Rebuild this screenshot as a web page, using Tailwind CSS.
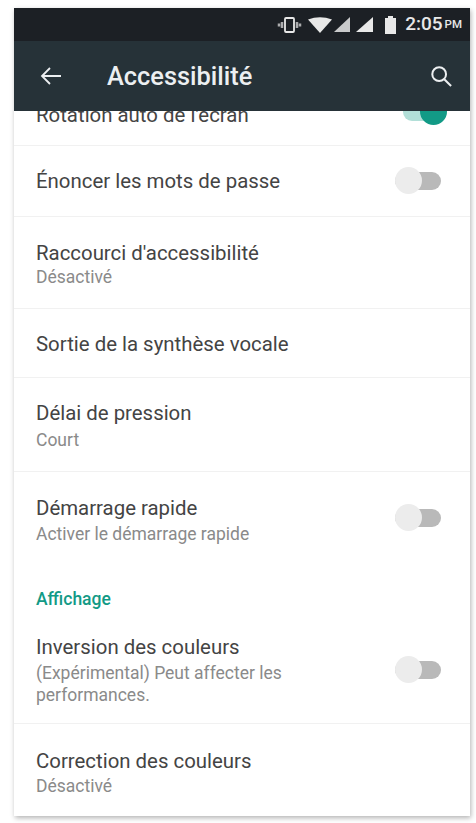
<!DOCTYPE html>
<html>
<head>
    <title>Accessibilité</title>
    <script src="https://cdn.jsdelivr.net/npm/@tailwindcss/browser@4"></script>
</head>
<body class="w-[476px] h-[823px] overflow-hidden bg-white font-['Roboto',sans-serif]">
    <div class="pt-[8px] pl-[14px]">
        <div class="w-[456px] h-[808px] flex flex-col overflow-hidden bg-white shadow-[1px_2px_5px_rgba(0,0,0,0.3)]">
            <!-- status bar -->
            <div class="h-[33px] shrink-0 bg-[#1c2025] flex items-center justify-end pr-[8px] text-[#e8e8e8]">
                <svg class="w-[25px] h-[18px]" viewBox="0 0 25 18" fill="none" stroke="currentColor">
                    <rect x="8" y="2" width="9" height="14" rx="1" stroke-width="1.800" />
                    <path d="M5 6v6M2 7.500v3M20 6v6M23 7.500v3" stroke-width="2.500" opacity=".7" />
                </svg>
                <svg class="w-[24px] h-[16px] ml-[6px]" viewBox="0 0 24 16" fill="currentColor">
                    <path d="M0 2.500Q12-2 24 2.500L12 16Z" />
                </svg>
                <svg class="w-[16px] h-[15px] ml-[2px]" viewBox="0 0 16 15" fill="currentColor" opacity=".85">
                    <path d="M16 0V15H0Z" />
                </svg>
                <svg class="w-[17px] h-[15px] ml-[6px]" viewBox="0 0 17 15" fill="currentColor">
                    <path d="M17 0V15H0Z" />
                </svg>
                <svg class="w-[11px] h-[18px] ml-[12px]" viewBox="0 0 11 18" fill="currentColor">
                    <path d="M3 0H8V2H11V18H0V2H3Z" />
                </svg>
                <span class="ml-[9px] text-[19px] font-medium">2:05</span>
                <span class="ml-[2px] text-[11.500px] font-medium">PM</span>
            </div>
            <!-- app bar -->
            <div class="h-[70px] shrink-0 bg-[#263238] flex items-center text-[#eceff1] relative z-10">
                <svg class="w-[22px] h-[22px] ml-[26px]" viewBox="0 0 22 22" fill="none" stroke="currentColor" stroke-width="1.800">
                    <path d="M21 11H2M10 3l-8 8 8 8" />
                </svg>
                <h1 class="ml-[45px] text-[25.400px] font-medium flex-1">Accessibilité</h1>
                <svg class="w-[22px] h-[22px] mr-[18px]" viewBox="0 0 24 24" fill="none" stroke="currentColor" stroke-width="2.200">
                    <circle cx="10" cy="10" r="7.500" />
                    <path d="M15 15l8 8" />
                </svg>
            </div>
            <!-- list -->
            <div class="flex-1 flex flex-col text-[#444444]">
                <div class="h-[35px] shrink-0 overflow-hidden border-b border-[#f1f1f1] flex justify-between pl-[22px] pr-[23px] items-start">
                    <div class="text-[20.400px] leading-[24px] -mt-[8px]">Rotation auto de l'écran</div>
                    <div class="relative w-[44px] h-[18px] -mt-[8px] rounded-full bg-[#b2dfd8]">
                        <div class="absolute right-0 -top-[5px] w-[27px] h-[27px] rounded-full bg-[#129a86]"></div>
                    </div>
                </div>
                <div class="h-[71px] shrink-0 border-b border-[#f1f1f1] flex items-center justify-between pl-[22px] pr-[29px]">
                    <div class="text-[20.400px]">Énoncer les mots de passe</div>
                    <div class="relative w-[46px] h-[18px] rounded-full bg-[#b9b9b9]">
                        <div class="absolute left-0 -top-[5px] w-[27px] h-[27px] rounded-full bg-[#ececec]"></div>
                    </div>
                </div>
                <div class="h-[92px] shrink-0 border-b border-[#f1f1f1] pl-[22px] pt-[23px]">
                    <div class="text-[20.400px] leading-[26px]">Raccourci d'accessibilité</div>
                    <div class="text-[17.500px] leading-[22px] text-[#8a8a8a]">Désactivé</div>
                </div>
                <div class="h-[69px] shrink-0 border-b border-[#f1f1f1] flex items-center pl-[22px] pt-[2px]">
                    <div class="text-[20.400px]">Sortie de la synthèse vocale</div>
                </div>
                <div class="h-[94px] shrink-0 border-b border-[#f1f1f1] pl-[22px] pt-[22px]">
                    <div class="text-[20.400px] leading-[26px]">Délai de pression</div>
                    <div class="text-[17.500px] leading-[22px] mt-[3px] text-[#8a8a8a]">Court</div>
                </div>
                <div class="h-[92px] shrink-0 flex items-center justify-between pl-[22px] pr-[29px]">
                    <div class="pt-[4px]">
                        <div class="text-[20.400px] leading-[26px]">Démarrage rapide</div>
                        <div class="text-[17.500px] leading-[22px] mt-[2px] text-[#8a8a8a]">Activer le démarrage rapide</div>
                    </div>
                    <div class="relative w-[46px] h-[18px] rounded-full bg-[#b9b9b9]">
                        <div class="absolute left-0 -top-[5px] w-[27px] h-[27px] rounded-full bg-[#ececec]"></div>
                    </div>
                </div>
                <div class="h-[44px] shrink-0 pt-[25px] pl-[22px] text-[17.500px] font-medium leading-[20px] text-[#129a86]">Affichage</div>
                <div class="h-[116px] shrink-0 border-b border-[#f1f1f1] flex items-start justify-between pl-[22px] pr-[29px]">
                    <div class="w-[270px] pt-[26px]">
                        <div class="text-[20.400px] leading-[26px]">Inversion des couleurs</div>
                        <div class="text-[17.500px] leading-[22px] mt-[2px] text-[#8a8a8a]">(Expérimental) Peut affecter les performances.</div>
                    </div>
                    <div class="relative w-[46px] h-[18px] mt-[53px] rounded-full bg-[#b9b9b9]">
                        <div class="absolute left-0 -top-[5px] w-[27px] h-[27px] rounded-full bg-[#ececec]"></div>
                    </div>
                </div>
                <div class="flex-1 pt-[24px] pl-[22px]">
                    <div class="text-[20.400px] leading-[26px]">Correction des couleurs</div>
                    <div class="text-[17.500px] leading-[22px] mt-[1px] text-[#8a8a8a]">Désactivé</div>
                </div>
            </div>
        </div>
    </div>
</body>
</html>
